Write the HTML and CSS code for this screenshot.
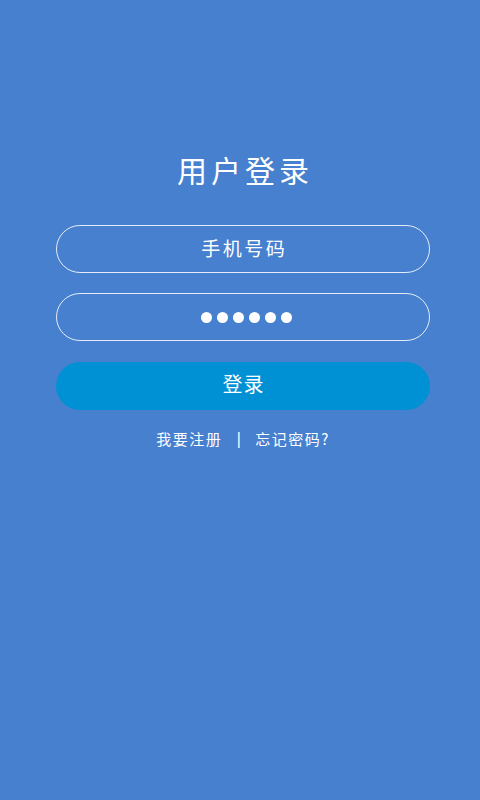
FILE: index.html
```html
<!DOCTYPE html>
<html lang="zh-CN">
<head>
<meta charset="utf-8">
<title>用户登录</title>
<link rel="stylesheet" href="styles.css">
</head>
<body>
<div class="page">
  <div class="form">
    <h1 class="title">用户登录</h1>
    <div class="field"><span class="placeholder">手机号码</span></div>
    <div class="field">
      <span class="dots"><i></i><i></i><i></i><i></i><i></i><i></i></span>
    </div>
    <div class="btn"><span class="btn-label">登录</span></div>
    <div class="links">
      <span class="link">我要注册</span>
      <span class="sep">|</span>
      <span class="link">忘记密码?</span>
    </div>
  </div>
</div>
</body>
</html>
```
FILE: styles.css
```css
html, body {
  margin: 0;
  padding: 0;
  background: #4680cf;
  height: 100%;
}
body {
  font-family: "Noto Sans CJK SC", "Noto Sans", "DejaVu Sans", sans-serif;
  color: #ffffff;
}
.page {
  height: 800px;
  padding-top: 149px;
  box-sizing: border-box;
}
.form {
  width: 374px;
  margin-left: 56px;
  display: flex;
  flex-direction: column;
  align-items: stretch;
}
.title {
  margin: 0 0 36px 0;
  font-size: 30px;
  line-height: 40px;
  font-weight: normal;
  letter-spacing: 4px;
  padding-left: 4px;
  text-align: center;
}
.field {
  height: 48px;
  box-sizing: border-box;
  border: 1px solid rgba(255, 255, 255, 0.85);
  border-radius: 24px;
  display: flex;
  align-items: center;
  justify-content: center;
  margin-bottom: 20px;
}
.placeholder {
  font-size: 19px;
  letter-spacing: 2.5px;
  padding-left: 2.5px;
  padding-bottom: 4px;
  line-height: 1;
}
.dots {
  display: flex;
  gap: 5px;
  padding-left: 7px;
}
.dots i {
  display: block;
  width: 11px;
  height: 11px;
  border-radius: 50%;
  background: #ffffff;
}
.btn {
  height: 48px;
  margin-top: 1px;
  border-radius: 24px;
  background: #0090d4;
  display: flex;
  align-items: center;
  justify-content: center;
  font-size: 20px;
}
.btn-label {
  letter-spacing: 1px;
  padding-left: 1px;
  padding-bottom: 4px;
  line-height: 1;
}
.links {
  margin-top: 19px;
  display: flex;
  justify-content: center;
  align-items: center;
  font-size: 15px;
  line-height: 20px;
}
.link {
  letter-spacing: 1.5px;
}
.sep {
  margin: 0 14px 0 14px;
  font-family: "DejaVu Sans", sans-serif;
}
```
